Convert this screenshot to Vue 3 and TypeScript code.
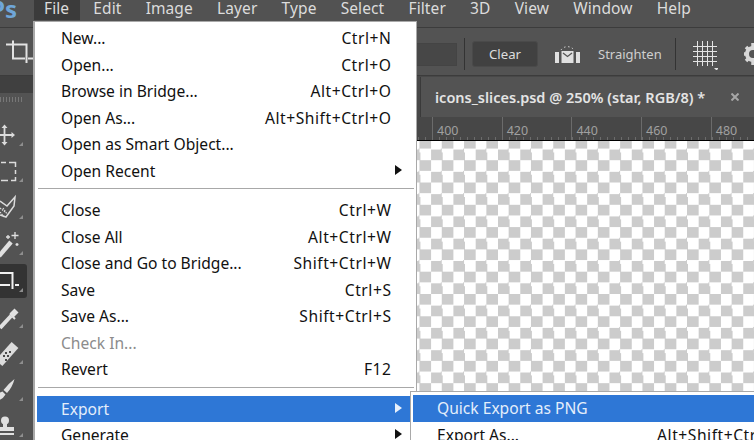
<script setup lang="ts">
interface Row { label?: string; key?: string; sub?: boolean; sep?: boolean; dim?: boolean; active?: boolean }
const menus: string[] = ['Edit', 'Image', 'Layer', 'Type', 'Select', 'Filter', '3D', 'View', 'Window', 'Help']
const rows: Row[] = [
  { label: 'New...', key: 'Ctrl+N' },
  { label: 'Open...', key: 'Ctrl+O' },
  { label: 'Browse in Bridge...', key: 'Alt+Ctrl+O' },
  { label: 'Open As...', key: 'Alt+Shift+Ctrl+O' },
  { label: 'Open as Smart Object...' },
  { label: 'Open Recent', sub: true },
  { sep: true },
  { label: 'Close', key: 'Ctrl+W' },
  { label: 'Close All', key: 'Alt+Ctrl+W' },
  { label: 'Close and Go to Bridge...', key: 'Shift+Ctrl+W' },
  { label: 'Save', key: 'Ctrl+S' },
  { label: 'Save As...', key: 'Shift+Ctrl+S' },
  { label: 'Check In...', dim: true },
  { label: 'Revert', key: 'F12' },
  { sep: true },
  { label: 'Export', sub: true, active: true },
  { label: 'Generate', sub: true },
]
const ticks: string[] = ['400', '420', '440', '460', '480']
</script>

<template>
  <div class="app">
    <header class="menubar">
      <span class="logo">Ps</span>
      <span class="mi open">File</span>
      <span v-for="m in menus" :key="m" class="mi">{{ m }}</span>
    </header>

    <div class="options">
      <svg class="crop" width="34" height="30" viewBox="0 0 34 30" fill="none" stroke="#e2e2e2" stroke-width="2">
        <path d="M6 5.500H26.500V24" />
        <path d="M13 1.500V19.500H25M28 19.500H33" />
      </svg>
      <div class="field"></div>
      <div class="vr"></div>
      <button class="clear">Clear</button>
      <svg class="level" width="25" height="22" viewBox="0 0 25 22">
        <path d="M6 7a8 8 0 0 1 13 0" fill="none" stroke="#ddd" stroke-width="1" stroke-dasharray="1.500 2.500" />
        <rect x="0" y="9" width="4" height="11" fill="#e0e0e0" />
        <rect x="21" y="9" width="4" height="11" fill="#e0e0e0" />
        <path d="M6.500 8h12v12h-12z" fill="#e0e0e0" />
        <path d="M8 10l4.500 3.500L17 10" fill="none" stroke="#555" stroke-width="1.300" />
      </svg>
      <span class="straighten">Straighten</span>
      <div class="vr second"></div>
      <svg class="grid" width="26" height="32" viewBox="0 0 26 32" fill="none" stroke="#e4e4e4" stroke-width="1">
        <path d="M1 8.500h24M1 13.500h24M1 18.500h24M1 23.500h24M5.500 3v25M10.500 3v25M15.500 3v25M20.500 3v25" />
        <path d="M22 30h5l-2.500 2.500z" fill="#e4e4e4" stroke="none" />
      </svg>
      <svg class="gear" width="11" height="24" viewBox="0 0 11 24">
        <circle cx="10" cy="12" r="6" fill="none" stroke="#d8d8d8" stroke-width="4" />
        <path d="M10 1v5M10 18v5M1 12h4M3 5l3 3M3 19l3-3" stroke="#d8d8d8" stroke-width="3.500" />
      </svg>
    </div>

    <div class="main">
      <aside class="tools">
        <div class="band"></div>
        <div class="grip"></div>
        <div class="tool">
          <svg width="27" height="34" viewBox="0 0 27 34" fill="none" stroke="#dcdcdc" stroke-width="1.800">
            <path d="M-4 17H13M4.500 9V25" />
            <path d="M11.500 14l3.500 3-3.500 3zM4.500 6.500l-3 3.500h6zM4.500 27.500l-3-3.500h6z" fill="#dcdcdc" stroke="none" />
          </svg>
        </div>
        <div class="tool">
          <svg width="27" height="34" viewBox="0 0 27 34" fill="none" stroke="#dcdcdc" stroke-width="1.500">
            <path d="M1 8.500H6M9 8.500H15.500V13M15.500 16V20M15.500 23V26.500H11M8 26.500H1" />
          </svg>
        </div>
        <div class="tool">
          <svg width="27" height="34" viewBox="0 0 27 34" fill="none" stroke="#dcdcdc" stroke-width="1.500">
            <path d="M0 10L7 15L15 6L14 15L6 26L0 24" />
            <path d="M0 17L5 21M0 21L4 26M3 17L7 23" stroke-width="1.200" stroke-dasharray="1.500 1" />
          </svg>
        </div>
        <div class="tool">
          <svg width="27" height="34" viewBox="0 0 27 34" fill="none" stroke="#e0e0e0">
            <path d="M-1 29L11 15" stroke-width="4.500" />
            <path d="M15 5v7M11.500 8.500h7M6 10h4M8 8v4M17 16v3M15.500 17.500h3" stroke-width="1.300" />
          </svg>
        </div>
        <div class="tool active">
          <svg width="27" height="34" viewBox="0 0 27 34" fill="none" stroke="#f0f0f0" stroke-width="2">
            <path d="M0 9H12.500V25M0 21H10M15 21H19" />
          </svg>
        </div>
        <div class="tool">
          <svg width="27" height="34" viewBox="0 0 27 34" fill="none" stroke="#e0e0e0">
            <path d="M12 11L16 15" stroke-width="7" />
            <path d="M10 14L15 19" stroke-width="2" />
            <path d="M11 16L0 28" stroke-width="4" />
          </svg>
        </div>
        <div class="tool">
          <svg width="27" height="34" viewBox="0 0 27 34" fill="none" stroke="#dcdcdc">
            <path d="M-1 27L15 9" stroke-width="9" />
            <path d="M3 20h2M7 20h2M5 24h2M9 16h2M5 17h2" stroke="#4a4a4a" stroke-width="2" />
          </svg>
        </div>
        <div class="tool">
          <svg width="27" height="34" viewBox="0 0 27 34" fill="#e0e0e0">
            <path d="M14.500 6Q12.500 14 7 20L3.500 17Q8 11 14.500 6zM2.500 18.500L5.500 21.500Q3 26 -1 27V20z" />
          </svg>
        </div>
        <div class="tool">
          <svg width="27" height="34" viewBox="0 0 27 34" fill="#e0e0e0">
            <circle cx="5" cy="11.500" r="4" />
            <path d="M3 14h4v4h7v4H-3v-4H3z" />
            <rect x="-3" y="24" width="17" height="2" />
          </svg>
        </div>
      </aside>

      <section class="doc">
        <div class="tabs">
          <div class="tab">
            <span class="tabtitle">icons_slices.psd @ 250% (star, RGB/8) *</span>
            <svg class="tabx" width="8" height="8" viewBox="0 0 8 8" stroke="#a6a6a6" stroke-width="2"><path d="M0.500 0.500L7.500 7.500M7.500 0.500L0.500 7.500" /></svg>
          </div>
        </div>
        <div class="ruler">
          <span v-for="t in ticks" :key="t" class="tick">{{ t }}</span>
        </div>
        <div class="canvas"></div>
      </section>
    </div>

    <nav class="menu">
      <template v-for="(r, i) in rows" :key="i">
        <div v-if="r.sep" class="sep"></div>
        <div v-else class="row" :class="{ dim: r.dim, active: r.active }">
          <span>{{ r.label }}</span>
          <span class="key">{{ r.key }}</span>
          <i v-if="r.sub" class="arrow"></i>
        </div>
      </template>
    </nav>

    <nav class="submenu">
      <div class="row active"><span>Quick Export as PNG</span></div>
      <div class="row"><span>Export As...</span><span class="key">Alt+Shift+Ctrl+W</span></div>
    </nav>
  </div>
</template>

<style>
html, body { margin: 0; background: #535353; }
</style>

<style scoped>
.app {
  position: relative;
  width: 754px;
  height: 440px;
  overflow: hidden;
  background: #535353;
  font-family: "Noto Sans", "Open Sans", sans-serif;
  font-size: 15.6px;
}
.menubar {
  display: flex;
  align-items: flex-start;
  height: 28px;
  box-sizing: border-box;
  border-bottom: 1px solid #3c3c3c;
  color: #dcdcdc;
  font-size: 15.5px;
  letter-spacing: 0.1px;
  background: #525252;
}
.logo {
  width: 34px;
  flex: none;
  height: 20px;
  overflow: hidden;
  font: bold 24px/18px "Open Sans", sans-serif;
  letter-spacing: 0;
  color: #6fa6d8;
  text-indent: -10px;
  white-space: nowrap;
}
.mi { padding: 0 12.1px; height: 20px; line-height: 17px; }
.mi.open { background: #3b3b3b; padding: 0 11px 0 10px; margin-right: 1px; }
.options {
  display: flex;
  align-items: center;
  height: 48px;
  box-sizing: border-box;
  padding-top: 5px;
  border-bottom: 1px solid #3c3c3c;
  background: #535353;
  overflow: hidden;
}
.crop { flex: none; }
.field { width: 43px; height: 23px; margin-left: 380px; flex: none; background: #474747; border: 1px solid #444; box-sizing: border-box; margin-right: 7px; }
.vr { width: 1px; height: 32px; flex: none; background: #333; }
.clear {
  margin-left: 7px;
  flex: none;
  width: 66px;
  height: 26px;
  padding: 0;
  background: #414141;
  border: 1px solid #4a4a4a;
  border-radius: 3px;
  color: #ddd;
  font: 13.2px "Noto Sans", sans-serif;
}
.level { margin-left: 17px; flex: none; }
.straighten { margin-left: 18px; width: 63px; flex: none; font-size: 13px; color: #cfcfcf; white-space: nowrap; }
.second { margin-left: 14px; }
.grid { margin-left: 16px; flex: none; }
.gear { margin-left: 25px; flex: none; }
.main { display: flex; height: 365px; }
.tools { width: 33px; flex: none; background: #535353; display: flex; flex-direction: column; align-items: flex-start; overflow: hidden; }
.band { height: 17px; width: 100%; background: #404040; flex: none; }
.grip {
  height: 5px;
  width: 22px;
  margin: 4px 0 16px;
  flex: none;
  background: repeating-linear-gradient(90deg, #777 0 1px, #535353 1px 3px);
}
.tool {
  width: 27px;
  height: 34px;
  margin-bottom: 2.4px;
  flex: none;
  position: relative;
}
.tool svg { display: block; overflow: hidden; }
.tool::after {
  content: "";
  position: absolute;
  right: 4px;
  bottom: 6px;
  border: 2.5px solid transparent;
  border-right-color: #8e8e8e;
  border-bottom-color: #8e8e8e;
}
.tool.active { background: #333; border-radius: 0 3px 3px 0; }
.doc { flex: 1; display: flex; flex-direction: column; min-width: 0; }
.tabs { height: 41px; flex: none; background: #484848; display: flex; padding: 1px 0 0 387px; box-sizing: border-box; }
.tab {
  flex: 1;
  display: flex;
  align-items: center;
  background: #535353;
  border-left: 1px solid #3a3a3a;
  padding-left: 14px;
  padding-bottom: 1px;
  white-space: nowrap;
}
.tabtitle { color: #e4e4e4; font: 600 14.5px "Noto Sans", sans-serif; width: 282px; flex: none; }
.tabx { margin-left: 14px; flex: none; }
.ruler {
  height: 24px;
  flex: none;
  box-sizing: border-box;
  border-bottom: 1px solid #000;
  display: flex;
  padding-left: 399px;
  background-color: #474747;
  background-image: repeating-linear-gradient(90deg, #6b6b6b 0 1px, transparent 1px 7px);
  background-size: 100% 3px;
  background-position: 0 bottom;
  background-repeat: no-repeat;
}
.tick {
  width: 69.7px;
  flex: none;
  box-sizing: border-box;
  padding: 6px 0 0 4px;
  border-left: 1px solid #6b6b6b;
  color: #a0a0a0;
  font-size: 12.5px;
  line-height: 16px;
}
.canvas {
  flex: 1;
  background-color: #fff;
  background-image: conic-gradient(#ccc 25%, #fff 0 50%, #ccc 0 75%, #fff 0);
  background-size: 22.3px 22.3px;
  background-position: 19.05px -3.1px;
}
.menu {
  position: absolute;
  left: 33px;
  top: 21px;
  width: 384px;
  height: 430px;
  box-sizing: border-box;
  background: #fff;
  border: 1px solid #a9a9a9;
  border-width: 1px 1px 1px 2px;
  padding: 3px 2px 0;
  color: #111;
}
.row {
  position: relative;
  display: flex;
  justify-content: space-between;
  align-items: center;
  height: 26.5px;
  box-sizing: border-box;
  padding: 0 22.5px 0 24px;
  white-space: nowrap;
  line-height: 26px;
}
.key { color: #111; letter-spacing: 0.55px; }
.dim { color: #8c8c8c; }
.row.active { background: #2e77d6; color: #e4eefb; }
.sep { height: 1px; background: #a8a8a8; margin: 4px 0 8px 1px; }
.arrow {
  position: absolute;
  right: 12px;
  top: 7px;
  border-left: 7px solid #111;
  border-top: 5px solid transparent;
  border-bottom: 5px solid transparent;
}
.row.active .arrow { border-left-color: #e8f0fb; }
.submenu {
  position: absolute;
  left: 410px;
  top: 391px;
  width: 360px;
  height: 60px;
  box-sizing: border-box;
  background: #fff;
  border: 1px solid #a9a9a9;
  padding: 3px 0 0 2px;
  color: #111;
}
.submenu .row { justify-content: flex-start; gap: 138px; }
</style>
